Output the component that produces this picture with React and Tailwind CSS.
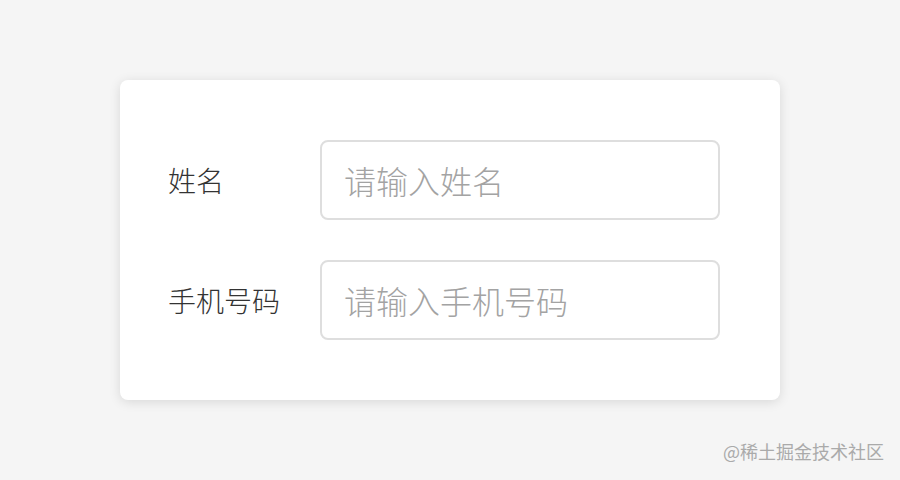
import React from 'react';

const FIELDS = [
  { label: '姓名', placeholder: '请输入姓名' },
  { label: '手机号码', placeholder: '请输入手机号码' },
];

const App = () => {
  return (
    <div
      className="h-[480px] w-[900px] bg-[#f5f5f5] pt-[80px] flex flex-col items-center"
      style={{ fontFamily: '"Noto Sans CJK SC", "Noto Sans", sans-serif' }}
    >
      {/* Form card */}
      <div className="w-[660px] h-[320px] bg-white rounded-[8px] shadow-[0_2px_12px_rgba(0,0,0,0.12)] pl-[48px] pr-[60px] pt-[60px] flex flex-col gap-[40px]">
        {FIELDS.map((f) => (
          <div key={f.label} className="flex items-center">
            <label className="w-[152px] text-[28px] font-light text-[#333] leading-none">{f.label}</label>
            <input
              className="w-[400px] h-[80px] border-2 border-[#dedede] rounded-[8px] px-[22px] text-[32px] font-light outline-none placeholder:text-[#a3a3a3]"
              placeholder={f.placeholder}
            />
          </div>
        ))}
      </div>

      {/* Watermark */}
      <div className="w-full flex justify-end pr-[16px] mt-[42px]">
        <span className="text-[18px] text-[#aaaaaa] leading-none">@稀土掘金技术社区</span>
      </div>
    </div>
  );
};

export default App;
